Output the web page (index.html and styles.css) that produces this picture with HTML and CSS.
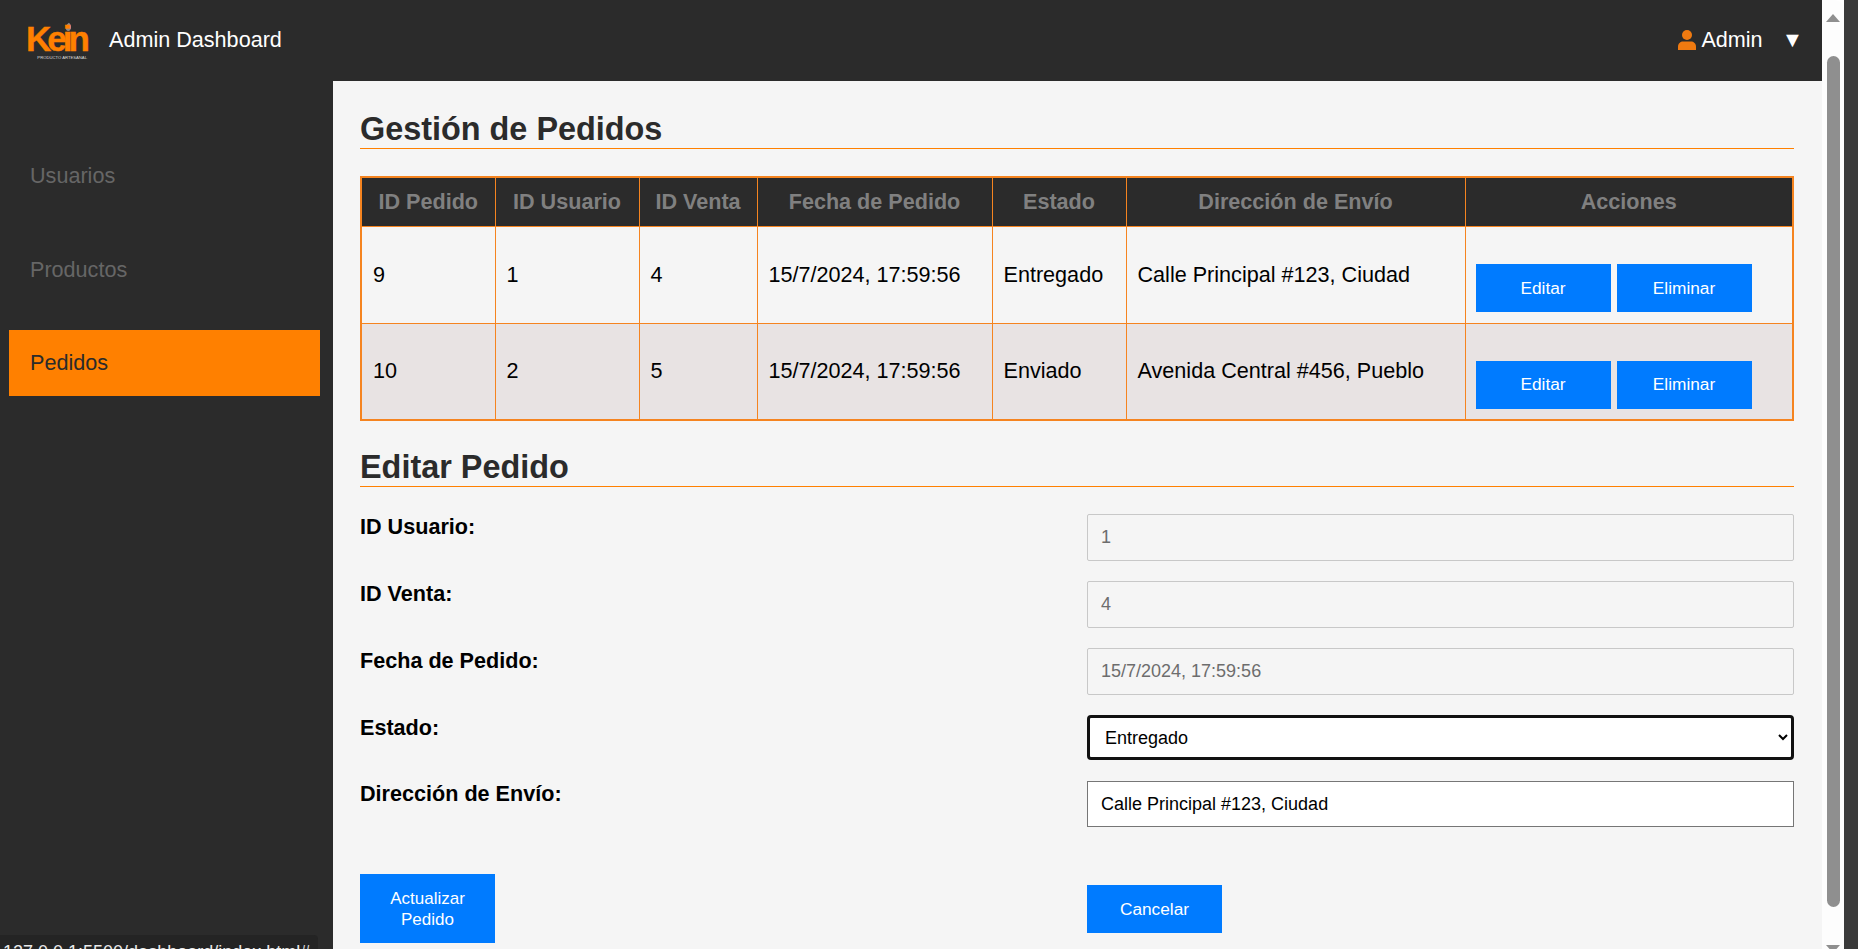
FILE: index.html
```html
<!DOCTYPE html>
<html lang="es">
<head>
  <meta charset="utf-8">
  <title>Admin Dashboard</title>
  <link rel="stylesheet" href="styles.css">
</head>
<body>
  <div class="window">
    <div class="page">
      <header class="topbar">
        <div class="brand">
          <div class="logo">
            <svg class="logo-leaf" width="7" height="10" viewBox="0 0 8 11"><path d="M4.500 0.500C7 2.500 7.500 6 6 9C5 10.500 2.500 10.500 1.500 9C0 6.500 1.500 2.500 4.500 0.500Z" fill="#8a8a8a"/></svg>
            <span class="logo-name">Kein</span>
            <span class="logo-tag">PRODUCTO ARTESANAL</span>
          </div>
          <span class="brand-title">Admin Dashboard</span>
        </div>
        <div class="user">
          <svg width="18" height="20" viewBox="0 0 18 20"><circle cx="9" cy="5" r="5" fill="#f07a10"/><path d="M0 20V16.500C0 13.500 2.500 11.500 5 11.500H13C15.500 11.500 18 13.500 18 16.500V20Z" fill="#f07a10"/></svg>
          <span class="user-name">Admin</span>
          <span class="user-caret">▼</span>
        </div>
      </header>

      <div class="body-row">
        <nav class="sidebar">
          <a class="nav-item" href="#">Usuarios</a>
          <a class="nav-item" href="#">Productos</a>
          <a class="nav-item active" href="#">Pedidos</a>
        </nav>

        <main class="content">
          <h2 class="section-title first">Gestión de Pedidos</h2>
          <table class="orders">
            <thead>
              <tr>
                <th>ID Pedido</th>
                <th>ID Usuario</th>
                <th>ID Venta</th>
                <th>Fecha de Pedido</th>
                <th>Estado</th>
                <th>Dirección de Envío</th>
                <th>Acciones</th>
              </tr>
            </thead>
            <tbody>
              <tr>
                <td>9</td>
                <td>1</td>
                <td>4</td>
                <td>15/7/2024, 17:59:56</td>
                <td>Entregado</td>
                <td>Calle Principal #123, Ciudad</td>
                <td class="actions"><a class="btn" href="#">Editar</a><a class="btn" href="#">Eliminar</a></td>
              </tr>
              <tr>
                <td>10</td>
                <td>2</td>
                <td>5</td>
                <td>15/7/2024, 17:59:56</td>
                <td>Enviado</td>
                <td>Avenida Central #456, Pueblo</td>
                <td class="actions"><a class="btn" href="#">Editar</a><a class="btn" href="#">Eliminar</a></td>
              </tr>
            </tbody>
          </table>

          <h2 class="section-title second">Editar Pedido</h2>
          <form class="edit-form">
            <label for="idUsuario">ID Usuario:</label>
            <input class="field" id="idUsuario" type="text" value="1" disabled>
            <label for="idVenta">ID Venta:</label>
            <input class="field" id="idVenta" type="text" value="4" disabled>
            <label for="fecha">Fecha de Pedido:</label>
            <input class="field" id="fecha" type="text" value="15/7/2024, 17:59:56" disabled>
            <label for="estado">Estado:</label>
            <select class="field select" id="estado">
              <option>Entregado</option>
              <option>Enviado</option>
            </select>
            <label for="direccion">Dirección de Envío:</label>
            <input class="field" id="direccion" type="text" value="Calle Principal #123, Ciudad">
            <div class="form-actions">
              <button class="btn submit" type="button">Actualizar Pedido</button>
            </div>
            <div class="form-actions cancel-cell">
              <button class="btn" type="button">Cancelar</button>
            </div>
          </form>
        </main>
      </div>
    </div>

    <div class="scrollbar">
      <span class="arrow up"></span>
      <span class="thumb"></span>
      <span class="arrow down"></span>
    </div>
    <div class="desktop-edge"></div>

    <div class="status-link">127.0.0.1:5500/dashboard/index.html#</div>
  </div>
</body>
</html>
```

FILE: styles.css
```css
* {
  box-sizing: border-box;
}

html, body {
  margin: 0;
  height: 100%;
  overflow: hidden;
}

body {
  font-family: "Liberation Sans", Arial, sans-serif;
  color: #000;
}

.window {
  display: flex;
  height: 949px;
  position: relative;
  overflow: hidden;
}

.page {
  width: 1822px;
  display: flex;
  flex-direction: column;
  background-color: #f5f5f5;
}

/* barra superior */
.topbar {
  height: 81px;
  background-color: #2b2b2b;
  color: #fff;
  display: flex;
  align-items: center;
  justify-content: space-between;
  padding: 0 19px 2px 28px;
}

.brand {
  display: flex;
  align-items: center;
  gap: 22px;
}

.logo {
  width: 59px;
  height: 38px;
  margin-top: 2px;
  position: relative;
}

.logo-name {
  position: absolute;
  left: -2px;
  top: 3px;
  color: #ff8000;
  font-size: 35px;
  line-height: 28px;
  font-weight: bold;
  letter-spacing: -4px;
  -webkit-text-stroke: 0.4px #ff8000;
}

.logo-leaf {
  position: absolute;
  left: 37px;
  top: 0;
}

.logo-tag {
  position: absolute;
  right: 0;
  top: 33px;
  font-size: 4.200px;
  line-height: 5px;
  color: #ddd;
  white-space: nowrap;
}

.brand-title {
  font-size: 21.600px;
}

.user {
  display: flex;
  align-items: center;
  font-size: 21.600px;
}

.user-name {
  margin-left: 5px;
}

.user-caret {
  margin-left: 19px;
  font-size: 21.600px;
}

/* cuerpo */
.body-row {
  flex: 1;
  display: flex;
  min-height: 0;
}

.sidebar {
  width: 333px;
  background-color: #2b2b2b;
  padding: 61px 13px 0 9px;
  display: flex;
  flex-direction: column;
  gap: 28px;
}

.nav-item {
  height: 66px;
  padding-left: 21px;
  padding-top: 2px;
  display: flex;
  align-items: center;
  font-size: 21.600px;
  color: #666;
  text-decoration: none;
}

.nav-item.active {
  padding-top: 0;
  background-color: #ff8000;
  color: #2b2b2b;
}

.content {
  flex: 1;
  padding: 30px 28px 0 27px;
  overflow: hidden;
}

.section-title {
  margin: 27px 0;
  height: 38px;
  font-size: 32.400px;
  line-height: 36px;
  font-weight: bold;
  color: #2b2b2b;
  border-bottom: 1px solid #ff8000;
}

.section-title.first {
  margin-top: 0;
}

.section-title.second {
  margin-top: 28px;
}

/* tabla */
.orders {
  width: 1434px;
  table-layout: fixed;
  border-collapse: collapse;
  border: 2px solid #f58420;
  font-size: 21.600px;
}

.orders th, .orders td {
  border: 1px solid #f58420;
}

.orders th {
  height: 49px;
  background-color: #2b2b2b;
  color: #808080;
  font-size: 21.600px;
}

.orders th:nth-child(1) { width: 134px; }
.orders th:nth-child(2) { width: 144px; }
.orders th:nth-child(3) { width: 118px; }
.orders th:nth-child(4) { width: 235px; }
.orders th:nth-child(5) { width: 134px; }
.orders th:nth-child(6) { width: 339px; }

.orders td {
  height: 97px;
  padding: 0 11px;
}

.orders tbody tr:nth-child(even) td {
  background-color: #e8e3e3;
}

.orders .actions {
  padding: 27px 0 0 10px;
}

.btn {
  display: inline-flex;
  align-items: center;
  justify-content: center;
  width: 135px;
  height: 48px;
  border: none;
  background-color: #007bff;
  color: #fff;
  font-family: inherit;
  font-size: 17.300px;
  text-decoration: none;
}

.actions .btn + .btn {
  margin-left: 6px;
}

/* formulario */
.edit-form {
  display: grid;
  grid-template-columns: 727px 707px;
  row-gap: 20px;
}

.edit-form label {
  font-size: 21.600px;
  font-weight: bold;
  line-height: 26px;
}

.field {
  width: 100%;
  height: 47px;
  padding: 0 13px;
  font-family: inherit;
  font-size: 18px;
  color: #000;
  background-color: #fff;
  border: 1px solid #767676;
  border-radius: 0;
}

.field:disabled {
  background-color: #f5f5f5;
  border: 1px solid #c8c8c8;
  border-radius: 2px;
  color: #6d6d6d;
}

.select {
  height: 45px;
  padding: 0 11px;
  border: 3px solid #111;
  border-radius: 4px;
  margin-bottom: 1px;
}

.select + label + .field {
  height: 46px;
}

.form-actions {
  margin-top: 27px;
}

.cancel-cell {
  margin-top: 38px;
}

.submit {
  height: 69px;
  padding: 0 20px;
  line-height: 21px;
  font-size: 17px;
}

/* barra de scroll */
.scrollbar {
  width: 22px;
  background-color: #fdfdfd;
  border-top-right-radius: 10px;
  display: flex;
  flex-direction: column;
  align-items: center;
  padding-top: 14px;
}

.thumb {
  flex: 1;
  width: 13px;
  margin: 34px 0 38px;
  background-color: #8f8f8f;
  border-radius: 7px;
}

.arrow {
  width: 0;
  height: 0;
  border-left: 7px solid transparent;
  border-right: 7px solid transparent;
}

.arrow.up {
  border-bottom: 8px solid #8f8f8f;
}

.arrow.down {
  border-top: 8px solid #8f8f8f;
  margin-bottom: -4px;
}

.desktop-edge {
  flex: 1;
  background-color: #3a3a3a;
}

.status-link {
  position: absolute;
  left: 0;
  top: 935px;
  width: 318px;
  height: 14px;
  padding: 7px 0 0 3px;
  overflow: hidden;
  background-color: #242424;
  border-top-right-radius: 4px;
  color: #e8e8e8;
  font-size: 18px;
  line-height: 20px;
  white-space: nowrap;
}
```
